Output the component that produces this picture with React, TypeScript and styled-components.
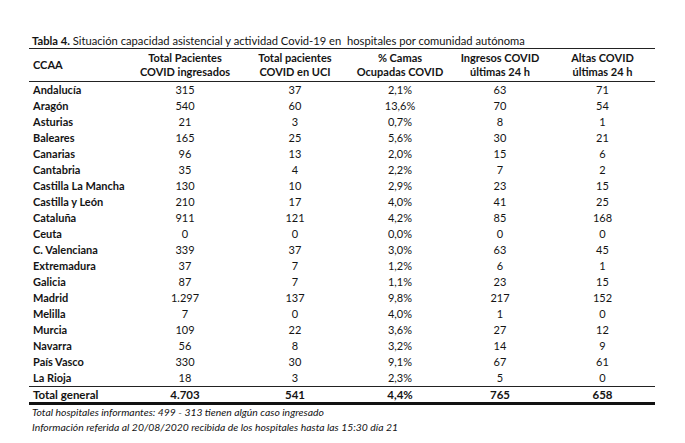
import React from "react";
import styled, { createGlobalStyle } from "styled-components";

const Global = createGlobalStyle`
  html, body { margin: 0; padding: 0; background: #fff; }
  body { font-family: Lato, "Open Sans", sans-serif; color: #141414; }
`;

const Page = styled.div`
  width: 685px;
  height: 443px;
  padding: 34px 0 0 29px;
  box-sizing: border-box;
`;

const Title = styled.div`
  font-size: 11.2px;
  line-height: 13px;
  padding-left: 3px;
  white-space: pre;
  b { font-weight: 700; }
`;

const Grid = styled.div`
  width: 626px;
  display: grid;
  grid-template-columns: 101px 110px 110px 100px 100px 105px;
  border-top: 1px solid #222;
  margin-top: 1px;
`;

const HeadCell = styled.div<{ $left?: boolean }>`
  height: 32px;
  border-bottom: 1px solid #222;
  display: flex;
  flex-direction: column;
  justify-content: center;
  align-items: ${(p) => (p.$left ? "flex-start" : "center")};
  padding-left: ${(p) => (p.$left ? "4px" : "0")};
  font-weight: 700;
  font-size: 11px;
  line-height: 14px;
  text-align: center;
`;

const Cell = styled.div<{ $left?: boolean; $total?: boolean }>`
  height: ${(p) => (p.$total ? "15px" : "16px")};
  line-height: ${(p) => (p.$total ? "15px" : "16px")};
  font-size: 11px;
  font-weight: ${(p) => (p.$left || p.$total ? 700 : 400)};
  text-align: ${(p) => (p.$left ? "left" : "center")};
  padding-left: ${(p) => (p.$left ? "4px" : "0")};
  white-space: nowrap;
  ${(p) =>
    p.$total
      ? `border-top: 1px solid #222; border-bottom: 3px solid #111; font-size: 11.5px;`
      : ""}
`;

const Notes = styled.div`
  padding-left: 3px;
  padding-top: 0;
  font-style: italic;
  font-size: 10.4px;
  line-height: 15px;
`;

const rows: [string, string, string, string, string, string][] = [
  ["Andalucía", "315", "37", "2,1%", "63", "71"],
  ["Aragón", "540", "60", "13,6%", "70", "54"],
  ["Asturias", "21", "3", "0,7%", "8", "1"],
  ["Baleares", "165", "25", "5,6%", "30", "21"],
  ["Canarias", "96", "13", "2,0%", "15", "6"],
  ["Cantabria", "35", "4", "2,2%", "7", "2"],
  ["Castilla La Mancha", "130", "10", "2,9%", "23", "15"],
  ["Castilla y León", "210", "17", "4,0%", "41", "25"],
  ["Cataluña", "911", "121", "4,2%", "85", "168"],
  ["Ceuta", "0", "0", "0,0%", "0", "0"],
  ["C. Valenciana", "339", "37", "3,0%", "63", "45"],
  ["Extremadura", "37", "7", "1,2%", "6", "1"],
  ["Galicia", "87", "7", "1,1%", "23", "15"],
  ["Madrid", "1.297", "137", "9,8%", "217", "152"],
  ["Melilla", "7", "0", "4,0%", "1", "0"],
  ["Murcia", "109", "22", "3,6%", "27", "12"],
  ["Navarra", "56", "8", "3,2%", "14", "9"],
  ["País Vasco", "330", "30", "9,1%", "67", "61"],
  ["La Rioja", "18", "3", "2,3%", "5", "0"],
];

const total = ["Total general", "4.703", "541", "4,4%", "765", "658"];

const headers: [string, string][] = [
  ["Total Pacientes", "COVID ingresados"],
  ["Total pacientes", "COVID en UCI"],
  ["% Camas", "Ocupadas COVID"],
  ["Ingresos COVID", "últimas 24 h"],
  ["Altas COVID", "últimas 24 h"],
];

export default function App() {
  return (
    <>
      <Global />
      <Page>
        <Title>
          <b>Tabla 4.</b> Situación capacidad asistencial y actividad Covid-19 en  hospitales por comunidad autónoma
        </Title>
        <Grid>
          <HeadCell $left>CCAA</HeadCell>
          {headers.map(([a, b]) => (
            <HeadCell key={a + b}>
              <span>{a}</span>
              <span>{b}</span>
            </HeadCell>
          ))}
          {rows.map((r) =>
            r.map((v, i) => (
              <Cell key={r[0] + i} $left={i === 0}>
                {v}
              </Cell>
            ))
          )}
          {total.map((v, i) => (
            <Cell key={"t" + i} $total $left={i === 0}>
              {v}
            </Cell>
          ))}
        </Grid>
        <Notes>
          <div>Total hospitales informantes: 499 - 313 tienen algún caso ingresado</div>
          <div>Información referida al 20/08/2020 recibida de los hospitales hasta las 15:30 día 21</div>
        </Notes>
      </Page>
    </>
  );
}
